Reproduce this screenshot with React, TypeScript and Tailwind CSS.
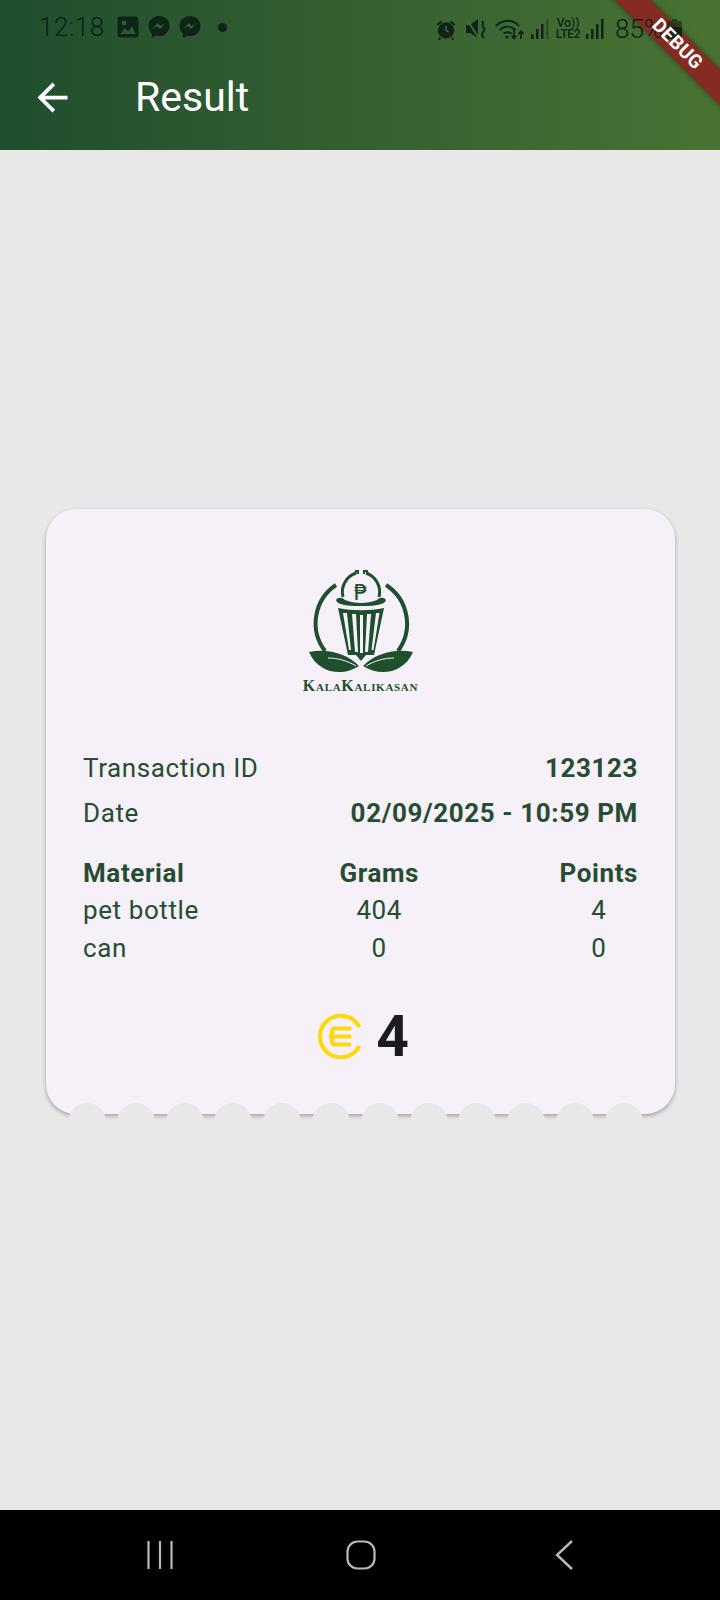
import { MdArrowBack } from "react-icons/md";

const font = "font-['Roboto',sans-serif]";
const scallops = Array.from({ length: 12 }, (_, i) => i);

function StatusLeft() {
  return (
    <div className="flex items-center pl-[39px]">
      <span className="text-[26px] tracking-[0.5px] font-light leading-none text-[#0a1f12]">12:18</span>
      <svg viewBox="0 0 22 22" className="ml-[12px] w-[22px] h-[22px]">
        <rect x="0.5" y="0.5" width="21" height="21" rx="3" fill="#0e2416" />
        <circle cx="7" cy="7" r="2.4" fill="#2a5a33" />
        <path d="M3 18l5-6 3.500 3.500L15 10l4 8z" fill="#2a5a33" />
      </svg>
      <Messenger className="ml-[9px]" />
      <Messenger className="ml-[9px]" />
      <span className="ml-[17px] w-[9px] h-[9px] rounded-full bg-[#0e2416]" />
    </div>
  );
}

function Messenger({ className }: { className: string }) {
  return (
    <svg viewBox="0 0 22 24" className={`${className} w-[22px] h-[24px]`}>
      <path d="M11 1C5 1 0.5 5.4 0.5 11c0 3 1.3 5.6 3.4 7.4V23l4-2.2c1 .3 2 .4 3.100 .4 6 0 10.500-4.500 10.500-10.200S17 1 11 1z" fill="#0e2416" />
      <path d="M4.500 14l5-6 3 3 4.500-3-5 6-3-3z" fill="#34653a" />
    </svg>
  );
}

function Signal({ className, dim }: { className: string; dim?: boolean }) {
  return (
    <svg viewBox="0 0 18 22" className={`${className} w-[18px] h-[22px]`} fill="#0e2416">
      <rect x="0" y="16" width="2.500" height="5" />
      <rect x="5" y="11" width="2.500" height="10" />
      <rect x="10" y="6" width="2.500" height="15" />
      <rect x="15" y="1" width="2.500" height="20" opacity={dim ? 0.35 : 1} />
    </svg>
  );
}

function StatusRight() {
  return (
    <div className="flex items-center text-[#0e2416]">
      {/* alarm */}
      <svg viewBox="0 0 22 22" className="ml-[436px] w-[20px] h-[21px]" fill="none" stroke="#0e2416">
        <circle cx="11" cy="12" r="8.500" fill="#0e2416" />
        <path d="M11 7v5l3 2" stroke="#46703a" strokeWidth="1.600" />
        <path d="M1.500 6L6 2M20.500 6L16 2M5 20l-2 2M17 20l2 2" strokeWidth="2.400" />
      </svg>
      {/* muted */}
      <svg viewBox="0 0 20 20" className="ml-[10px] w-[20px] h-[20px]" fill="none" stroke="#0e2416">
        <path d="M0 6h4l8-6v19l-8-5H0z" fill="#0e2416" stroke="none" />
        <path d="M1 1l12 18" stroke="#46703a" strokeWidth="1.500" />
        <path d="M16 2c3 2-1 4 1 6s2 3 0 5-1 4 1 6" strokeWidth="2" />
      </svg>
      {/* wifi */}
      <svg viewBox="0 0 30 22" className="ml-[9px] w-[30px] h-[22px]" fill="none" stroke="#0e2416">
        <path d="M1 8c7-7 17-7 23 0M4.500 12c5-4.500 11-4.500 16 0M8.500 15.500c3-2 5-2 8 0" strokeWidth="2" />
        <circle cx="12" cy="19" r="1.600" fill="#0e2416" stroke="none" />
        <path d="M19 11v9M16.500 17.500l2.500 3 2.500-3M26 21v-8M23.500 16l2.500-3 2.500 3" strokeWidth="1.700" />
      </svg>
      <Signal className="ml-[6px]" dim />
      <div className="ml-[6px] w-[26px] flex flex-col items-center text-[12px] leading-[11px] font-medium">
        <span>Vo))</span>
        <span className="tracking-[-0.4px]">LTE2</span>
      </div>
      <Signal className="ml-[5px]" />
      <span className="ml-[11px] text-[26px] font-light leading-none w-[52px] whitespace-nowrap text-[#0a1f12]">85%</span>
      {/* battery, about half full */}
      <svg viewBox="0 0 15 20" className="w-[15px] h-[20px]" fill="#0e2416">
        <rect x="5" y="0" width="5" height="2" opacity="0.55" />
        <rect x="0" y="2" width="15" height="7" rx="1.500" opacity="0.55" />
        <rect x="0" y="8" width="15" height="12" rx="1.500" />
      </svg>
    </div>
  );
}

function Logo() {
  const green = "#1f4f2d";
  return (
    <svg viewBox="0 0 180 124" className="w-[180px] h-[124px]">
      <path d="M65 35A46 46 0 0 0 54 101M115 35A46 46 0 0 1 127 101" fill="none" stroke={green} strokeWidth="4" />
      <path d="M72 47A20 20 0 0 1 85 23M95 23A20 20 0 0 1 108 47" fill="none" stroke={green} strokeWidth="3" />
      <path d="M84 25l1-4h2v3M93 24v-3h3l1 4" fill="none" stroke={green} strokeWidth="2" />
      <text x="90" y="50" textAnchor="middle" fontSize="22" fill={green} fontFamily="'DejaVu Sans',sans-serif">₱</text>
      <path d="M65 50c2-3 6-3 9 0 10 4 22 4 32 0 3-3 7-3 9 0-1 4-8 6-25 6s-24-2-25-6z" fill={green} />
      <path d="M67 58c14 3 32 3 46 0l-10 47H77z" fill={green} />
      <path d="M72 63h4l4 37h-2zM81 64h4l2 38h-3zM89 65h3v38h-3zM96 64h4l-3 38h-3zM105 63h3.500l-6 37h-2z" fill="#f6f1f9" />
      <path d="M38 102c17-4 38 1 50 14-15 10-40 9-50-14z" fill={green} />
      <path d="M142 102c-17-4-38 1-50 14 15 10 40 9 50-14z" fill={green} />
      <path d="M57 108c10 0 20 3 28 8M123 108c-10 0-20 3-28 8" fill="none" stroke="#f6f1f9" strokeWidth="1" />
      <path d="M85 105h10l-5 6z" fill={green} />
    </svg>
  );
}

function Coin() {
  return (
    <svg viewBox="0 0 45 45" className="w-[45px] h-[45px]" fill="none" stroke="#fdd90b">
      <path d="M41.500 11.500A20.800 20.800 0 1 0 41.500 33.500" strokeWidth="4.200" strokeLinecap="round" />
      <path d="M34 14.500H18q-3 0-3 3v10q0 3 3 3h16M12 22.500h22" strokeWidth="4" />
    </svg>
  );
}

function Column({ items, start }: { items: string[]; start?: boolean }) {
  return (
    <div className={`flex flex-col ${start ? "items-start" : "items-center"}`}>
      <span className="font-bold leading-[37px]">{items[0]}</span>
      <span className="leading-[36px]">{items[1]}</span>
      <span className="mt-[1px] leading-[38px]">{items[2]}</span>
    </div>
  );
}

export default function App() {
  return (
    <div className={`relative w-[720px] h-[1600px] overflow-hidden flex flex-col bg-[#e8e8e8] ${font}`}>
      <header className="h-[150px] bg-gradient-to-r from-[#1f4e2e] to-[#4a7333]">
        <div className="h-[54px]" />
        <div className="flex items-center h-[86px] pl-[30px] text-white">
          <MdArrowBack className="w-[45px] h-[45px]" />
          <h1 className="ml-[60px] text-[41px] leading-none">Result</h1>
        </div>
      </header>

      <main className="flex-1 pt-[359px] pl-[46px] pr-[45px]">
        <div className="relative h-[605px] rounded-[30px] bg-[#f6f1f9] shadow-[0_2px_4px_rgba(0,0,0,0.3)] overflow-hidden pt-[41px] px-[37px] text-[#264d31] text-[26px] tracking-[0.6px]">
          <div className="flex flex-col items-center">
            <Logo />
            <div className="mt-[2px] h-[20px] leading-[20px] text-[16px] tracking-[0.7px] text-[#1f4f2d] font-['Liberation_Serif',serif] [font-variant:small-caps] font-bold">
              KalaKalikasan
            </div>
          </div>

          <div className="mt-[50px] flex justify-between leading-[44px]">
            <span>Transaction ID</span>
            <span className="font-bold">123123</span>
          </div>
          <div className="mt-[1px] flex justify-between leading-[45px]">
            <span>Date</span>
            <span className="font-bold">02/09/2025 - 10:59 PM</span>
          </div>

          <div className="mt-[19px] flex justify-between">
            <Column start items={["Material", "pet bottle", "can"]} />
            <Column items={["Grams", "404", "0"]} />
            <Column items={["Points", "4", "0"]} />
          </div>

          <div className="mt-[41px] pl-[4.5px] flex items-center justify-center gap-[14.5px] h-[56px]">
            <Coin />
            <span className="text-[57px] font-bold leading-none text-[#1d1b20] tracking-normal">4</span>
          </div>
        </div>
      </main>

      {/* ticket edge, painted over the card in the page colour */}
      <div className="absolute left-[68px] top-[1103px] flex gap-[10.8px]">
        {scallops.map((i) => (
          <span key={i} className="w-[38px] h-[38px] rounded-full bg-[#e8e8e8]" />
        ))}
      </div>

      <nav className="h-[90px] bg-black flex items-center justify-between pl-[147px] pr-[147px]">
        <svg viewBox="0 0 26 28" className="w-[26px] h-[28px]" stroke="#b9b9b9" strokeWidth="2.200">
          <path d="M1.500 0v28M13 0v28M24.500 0v28" />
        </svg>
        <svg viewBox="0 0 30 30" className="mr-[6px] w-[30px] h-[30px]" fill="none" stroke="#b9b9b9" strokeWidth="2.200">
          <rect x="1.500" y="1.500" width="27" height="27" rx="10" />
        </svg>
        <svg viewBox="0 0 18 30" className="w-[18px] h-[30px]" fill="none" stroke="#b9b9b9" strokeWidth="2.400">
          <path d="M17 1L2 15l15 14" />
        </svg>
      </nav>

      {/* debug ribbon, below the status bar */}
      <div className="absolute left-[577px] top-[32px] w-[200px] h-[25px] rotate-45 bg-[#842c21] shadow-[0_0_6px_rgba(0,0,0,0.4)]" />

      <div className="absolute left-0 top-0 w-[720px] h-[54px] flex items-center">
        <StatusLeft />
        <div className="absolute left-0 top-[16px]">
          <StatusRight />
        </div>
      </div>

      {/* ribbon label stays readable over the status icons */}
      <div className="absolute left-[577px] top-[32px] w-[200px] h-[25px] rotate-45 flex items-center justify-center text-white text-[19px] tracking-[0.4px] font-bold">
        DEBUG
      </div>
    </div>
  );
}
